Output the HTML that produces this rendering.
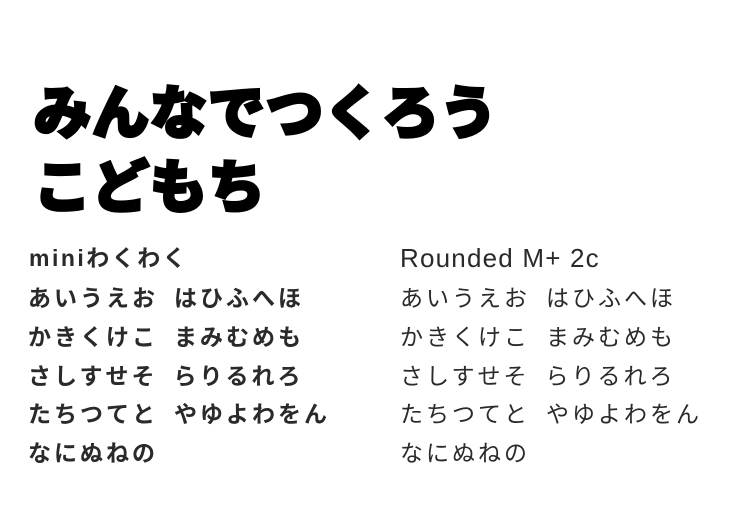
<!DOCTYPE html>
<html><head><meta charset="utf-8"><style>
html,body{margin:0;padding:0;background:#fff;width:729px;height:516px;overflow:hidden;position:relative}
.t{position:absolute;font-family:"Liberation Sans","Noto Sans CJK JP",sans-serif;white-space:nowrap;line-height:1}
.title{font-size:57px;font-weight:900;color:#000;letter-spacing:1px;-webkit-text-stroke:3px #000}
.l{font-size:23px;font-weight:bold;color:#2a2a2a;letter-spacing:3px}
.r{font-size:23px;font-weight:normal;color:#2a2a2a;letter-spacing:3px}
.g{display:inline-block;width:16px}
</style></head><body>
<div class="t title" style="left:34px;top:86px">みんなでつくろう</div>
<div class="t title" style="left:34px;top:160px">こどもち</div>

<div class="t l" style="left:29px;top:247px;letter-spacing:2.5px">miniわくわく</div>
<div class="t l" style="left:28px;top:287px">あいうえお<span class="g"></span>はひふへほ</div>
<div class="t l" style="left:28px;top:326px">かきくけこ<span class="g"></span>まみむめも</div>
<div class="t l" style="left:28px;top:365px">さしすせそ<span class="g"></span>らりるれろ</div>
<div class="t l" style="left:28px;top:403px">たちつてと<span class="g"></span>やゆよわをん</div>
<div class="t l" style="left:28px;top:442px">なにぬねの</div>

<div class="t r" style="left:400px;top:245px;font-size:26px;letter-spacing:1.2px">Rounded M+ 2c</div>
<div class="t r" style="left:400px;top:287px">あいうえお<span class="g"></span>はひふへほ</div>
<div class="t r" style="left:400px;top:326px">かきくけこ<span class="g"></span>まみむめも</div>
<div class="t r" style="left:400px;top:365px">さしすせそ<span class="g"></span>らりるれろ</div>
<div class="t r" style="left:400px;top:403px">たちつてと<span class="g"></span>やゆよわをん</div>
<div class="t r" style="left:400px;top:442px">なにぬねの</div>
</body></html>
